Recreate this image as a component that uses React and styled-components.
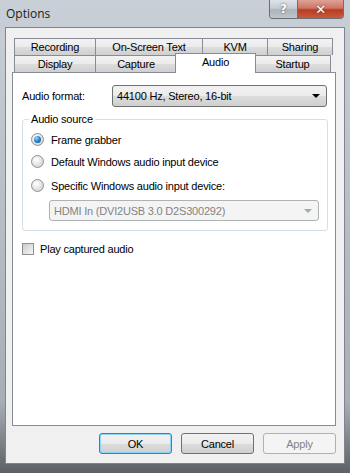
import styled, { createGlobalStyle } from "styled-components";

const Global = createGlobalStyle`
  html, body { margin: 0; padding: 0; background: #2b2b2b; }
  * { box-sizing: border-box; }
`;

const Window = styled.div`
  width: 350px;
  height: 473px;
  display: flex;
  flex-direction: column;
  padding: 0 5px 0 5px;
  background: linear-gradient(180deg, #c9cfd6 0%, #b9c0c8 40%, #a7aeb6 85%, #5d6166 100%);
  font-family: "Liberation Sans", Arial, sans-serif;
  font-size: 11px;
  letter-spacing: -0.2px;
  color: #000;
`;

const TitleBar = styled.div`
  height: 27px;
  display: flex;
  align-items: flex-start;
  flex-shrink: 0;
`;

const Title = styled.div`
  font-family: "Open Sans", "Noto Sans", sans-serif;
  font-size: 12px;
  letter-spacing: 0;
  color: #1b1b1b;
  padding: 5px 0 0 1px;
`;

const CaptionButtons = styled.div`
  margin-left: auto;
  margin-right: 1px;
  display: flex;
  height: 19px;
  border: 1px solid #6b7077;
  border-top: none;
  border-radius: 0 0 4px 4px;
  overflow: hidden;
`;

const CaptionButton = styled.div`
  width: ${({ w }) => w}px;
  height: 100%;
  display: flex;
  align-items: center;
  justify-content: center;
  color: #fff;
  font-weight: bold;
  font-family: "DejaVu Sans", sans-serif;
  font-size: ${({ red }) => (red ? 13 : 12)}px;
  text-shadow: 0 0 2px #444;
  background: ${({ red }) =>
    red
      ? "linear-gradient(180deg, #e0a197 0%, #cf7463 45%, #b83c23 55%, #c95a3e 100%)"
      : "linear-gradient(180deg, #dfe3e7 0%, #c7ccd2 45%, #aeb4bb 55%, #bfc5cb 100%)"};
  & + & { border-left: 1px solid #6b7077; }
`;

const Client = styled.div`
  flex: 1;
  display: flex;
  flex-direction: column;
  background: #f0f0f0;
  border: 1px solid #7f858c;
  padding: 10px 8px 9px 6px;
`;

const TabRow = styled.div`
  display: flex;
  height: 17px;
  padding-left: 2px;
  position: relative;
  z-index: ${({ front }) => (front ? 2 : 1)};
`;

const Tab = styled.div`
  width: ${({ w }) => w}px;
  flex-shrink: 0;
  display: flex;
  align-items: center;
  justify-content: center;
  border: 1px solid #898c95;
  border-bottom: none;
  border-left-width: ${({ first }) => (first ? 1 : 0)}px;
  background: linear-gradient(180deg, #f2f2f2 0%, #ebebeb 50%, #dddddd 51%, #cfcfcf 100%);
  color: #000;
  line-height: 1;
  ${({ active }) =>
    active &&
    `
    background: #fff;
    border-left-width: 1px;
    margin: -2px -1px -1px -2px;
    height: 20px;
    padding-bottom: 3px;
    position: relative;
    z-index: 3;
  `}
`;

const Page = styled.div`
  width: 324px;
  height: 354px;
  background: #fff;
  border: 1px solid #898c95;
  position: relative;
  z-index: 1;
  padding: 12px 8px 0 9px;
  display: flex;
  flex-direction: column;
`;

const FormatRow = styled.div`
  display: flex;
  align-items: center;
  height: 22px;
`;

const Label = styled.div`
  width: 90px;
`;

const Combo = styled.div`
  width: ${({ w }) => w}px;
  height: ${({ h }) => h}px;
  border: 1px solid ${({ disabled }) => (disabled ? "#adb2b5" : "#707070")};
  border-radius: 3px;
  display: flex;
  align-items: center;
  padding: 0 6px 0 4px;
  color: ${({ disabled }) => (disabled ? "#838383" : "#000")};
  background: ${({ disabled }) =>
    disabled
      ? "#f4f4f4"
      : "linear-gradient(180deg, #f2f2f2 0%, #ebebeb 50%, #dddddd 51%, #cfcfcf 100%)"};
`;

const ComboText = styled.span`
  flex: 1;
`;

const Arrow = styled.span`
  width: 0;
  height: 0;
  border-left: 4px solid transparent;
  border-right: 4px solid transparent;
  border-top: 4px solid ${({ disabled }) => (disabled ? "#a8a8a8" : "#000")};
`;

const Group = styled.div`
  margin-top: 12px;
  width: 306px;
  height: 112px;
  border: 1px solid #d5dfe5;
  border-radius: 3px;
  position: relative;
  padding: 13px 0 0 8px;
  display: flex;
  flex-direction: column;
`;

const Legend = styled.div`
  position: absolute;
  top: -7px;
  left: 6px;
  padding: 0 2px;
  background: #fff;
  line-height: 13px;
`;

const Option = styled.div`
  display: flex;
  align-items: center;
  height: 13px;
  margin-bottom: ${({ gap }) => gap}px;
  gap: 4px;
`;

const Radio = styled.span`
  width: 13px;
  height: 13px;
  border-radius: 50%;
  border: 1px solid #8e8f8f;
  background: radial-gradient(circle at 40% 35%, #ffffff 0%, #e2e2e2 55%, #c8c8c8 100%);
  display: flex;
  align-items: center;
  justify-content: center;
  flex-shrink: 0;
  margin-right: 3px;
  &::after {
    content: "";
    display: ${({ checked }) => (checked ? "block" : "none")};
    width: 7px;
    height: 7px;
    border-radius: 50%;
    background: radial-gradient(circle at 35% 30%, #9cd6ff 0%, #2a8ad4 45%, #0b4b8a 100%);
  }
`;

const SubCombo = styled.div`
  margin-left: 18px;
`;

const CheckRow = styled.div`
  margin-top: 12px;
  display: flex;
  align-items: center;
  gap: 6px;
`;

const Check = styled.span`
  width: 12px;
  height: 12px;
  border: 1px solid #8e8f8f;
  background: linear-gradient(135deg, #cbcbcb 0%, #f6f6f6 100%);
`;

const ButtonRow = styled.div`
  margin-top: auto;
  display: flex;
  justify-content: flex-end;
  gap: 9px;
`;

const Button = styled.div`
  width: 73px;
  height: 21px;
  border-radius: 3px;
  display: flex;
  align-items: center;
  justify-content: center;
  border: 1px solid ${({ variant }) =>
    variant === "default" ? "#3c7fb1" : variant === "disabled" ? "#adb2b5" : "#707070"};
  color: ${({ variant }) => (variant === "disabled" ? "#838383" : "#000")};
  background: ${({ variant }) =>
    variant === "disabled"
      ? "#f4f4f4"
      : "linear-gradient(180deg, #f2f2f2 0%, #ebebeb 50%, #dddddd 51%, #cfcfcf 100%)"};
  ${({ variant }) => variant === "default" && "box-shadow: inset 0 0 0 1px #8fd3f7;"}
`;

const BottomEdge = styled.div`
  height: 9px;
  flex-shrink: 0;
`;

export default function App() {
  return (
    <>
      <Global />
      <Window>
        <TitleBar>
          <Title>Options</Title>
          <CaptionButtons>
            <CaptionButton w={27}>?</CaptionButton>
            <CaptionButton w={46} red>
              ✕
            </CaptionButton>
          </CaptionButtons>
        </TitleBar>
        <Client>
          <TabRow>
            <Tab w={82} first>Recording</Tab>
            <Tab w={107}>On-Screen Text</Tab>
            <Tab w={65}>KVM</Tab>
            <Tab w={65}>Sharing</Tab>
          </TabRow>
          <TabRow front>
            <Tab w={82} first>Display</Tab>
            <Tab w={81}>Capture</Tab>
            <Tab w={81} active>Audio</Tab>
            <Tab w={76}>Startup</Tab>
          </TabRow>
          <Page>
            <FormatRow>
              <Label>Audio format:</Label>
              <Combo w={215} h={22}>
                <ComboText>44100 Hz, Stereo, 16-bit</ComboText>
                <Arrow />
              </Combo>
            </FormatRow>
            <Group>
              <Legend>Audio source</Legend>
              <Option gap={9}>
                <Radio checked />
                Frame grabber
              </Option>
              <Option gap={11}>
                <Radio />
                Default Windows audio input device
              </Option>
              <Option gap={8}>
                <Radio />
                Specific Windows audio input device:
              </Option>
              <SubCombo>
                <Combo w={270} h={21} disabled>
                  <ComboText>HDMI In (DVI2USB 3.0 D2S300292)</ComboText>
                  <Arrow disabled />
                </Combo>
              </SubCombo>
            </Group>
            <CheckRow>
              <Check />
              Play captured audio
            </CheckRow>
          </Page>
          <ButtonRow>
            <Button variant="default">OK</Button>
            <Button>Cancel</Button>
            <Button variant="disabled">Apply</Button>
          </ButtonRow>
        </Client>
        <BottomEdge />
      </Window>
    </>
  );
}
